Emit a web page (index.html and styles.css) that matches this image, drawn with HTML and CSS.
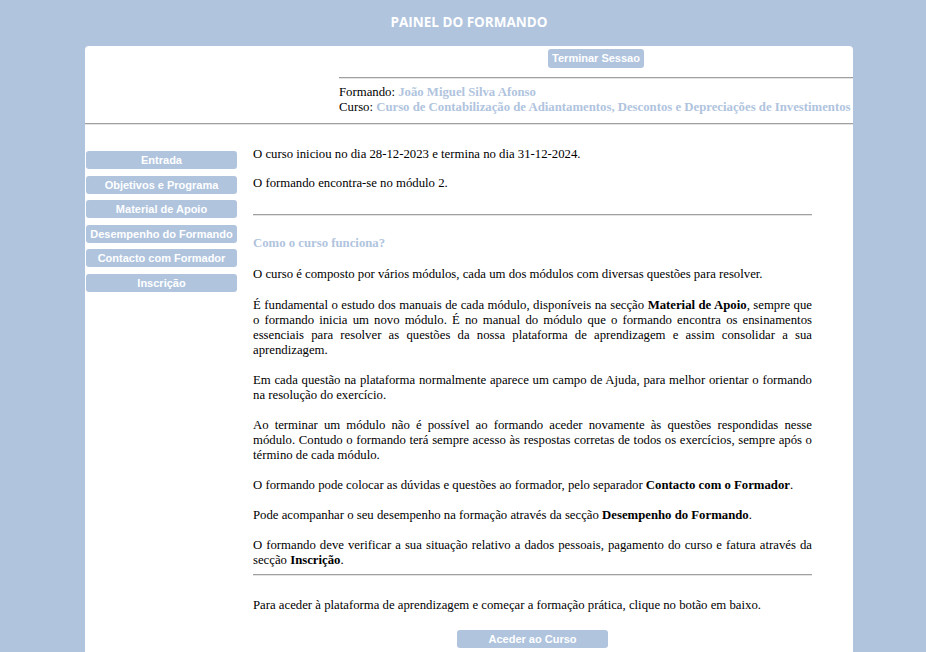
FILE: index.html
```html
<!DOCTYPE html>
<html lang="pt">
<head>
    <meta charset="UTF-8">
    <title>Painel do Formando</title>
    <link rel="stylesheet" href="styles.css">
</head>
<body>
    <div class="wrapper">
        <header class="header">
            <h1>PAINEL DO FORMANDO</h1>
        </header>

        <div class="card">
            <div class="top">
                <div></div>
                <div class="session">
                    <div class="session-btn"><button class="btn">Terminar Sessao</button></div>
                    <hr class="line">
                    <div class="info">
                        Formando: <b>João Miguel Silva Afonso</b><br>
                        Curso: <b>Curso de Contabilização de Adiantamentos, Descontos e Depreciações de Investimentos</b>
                    </div>
                </div>
            </div>
            <hr class="line">

            <div class="main">
                <nav class="menu">
                    <button class="btn">Entrada</button>
                    <button class="btn">Objetivos e Programa</button>
                    <button class="btn">Material de Apoio</button>
                    <button class="btn">Desempenho do Formando</button>
                    <button class="btn">Contacto com Formador</button>
                    <button class="btn">Inscrição</button>
                </nav>

                <div class="content">
                    <p class="first">O curso iniciou no dia 28-12-2023 e termina no dia 31-12-2024.</p>
                    <p>O formando encontra-se no módulo 2.</p>
                    <hr class="line sep">
                    <h3>Como o curso funciona?</h3>
                    <p class="intro">O curso é composto por vários módulos, cada um dos módulos com diversas questões para resolver.</p>
                    <p>É fundamental o estudo dos manuais de cada módulo, disponíveis na secção <b>Material de Apoio</b>, sempre que o formando inicia um novo módulo. É no manual do módulo que o formando encontra os ensinamentos essenciais para resolver as questões da nossa plataforma de aprendizagem e assim consolidar a sua aprendizagem.</p>
                    <p>Em cada questão na plataforma normalmente aparece um campo de Ajuda, para melhor orientar o formando na resolução do exercício.</p>
                    <p>Ao terminar um módulo não é possível ao formando aceder novamente às questões respondidas nesse módulo. Contudo o formando terá sempre acesso às respostas corretas de todos os exercícios, sempre após o término de cada módulo.</p>
                    <p>O formando pode colocar as dúvidas e questões ao formador, pelo separador <b>Contacto com o Formador</b>.</p>
                    <p>Pode acompanhar o seu desempenho na formação através da secção <b>Desempenho do Formando</b>.</p>
                    <p class="last">O formando deve verificar a sua situação relativo a dados pessoais, pagamento do curso e fatura através da secção <b>Inscrição</b>.</p>
                    <hr class="line sep-bottom">
                    <p>Para aceder à plataforma de aprendizagem e começar a formação prática, clique no botão em baixo.</p>
                    <div class="start">
                        <button class="btn">Aceder ao Curso</button>
                    </div>
                </div>
            </div>
        </div>
    </div>
</body>
</html>
```

FILE: styles.css
```css
:root {
    --primary-color: #b0c4de;
    --line-color: #a0a0a0;
    --text-color: #000;
}

* {
    margin: 0;
    padding: 0;
    box-sizing: border-box;
}

body {
    background-color: var(--primary-color);
    font-family: "Liberation Serif", "Times New Roman", serif;
    font-size: 12.75px;
    line-height: 15px;
    color: var(--text-color);
}

.wrapper {
    width: 768px;
    margin-left: 85px;
}

.header {
    height: 46px;
    display: flex;
    align-items: center;
    justify-content: center;
}

.header h1 {
    font-family: "Open Sans", Arial, sans-serif;
    font-size: 13.5px;
    font-weight: bold;
    color: white;
    padding-bottom: 1px;
}

.card {
    background-color: white;
    border-radius: 4px 4px 0 0;
    min-height: 620px;
}

.btn {
    background-color: var(--primary-color);
    color: white;
    font-family: "Liberation Sans", Arial, sans-serif;
    font-size: 11px;
    font-weight: bold;
    line-height: 14px;
    padding: 2px 3px;
    border: none;
    border-radius: 3px;
    cursor: pointer;
}

.line {
    border: none;
    border-top: 1px solid var(--line-color);
    border-bottom: 1px solid #e4e4e4;
    height: 0;
}

.top {
    display: grid;
    grid-template-columns: 254px minmax(0, 1fr);
    padding-top: 3px;
}

.session-btn {
    text-align: center;
}

.session-btn .btn {
    padding: 2px 4px 3px;
}

.session .line {
    margin-top: 9px;
}

.info {
    padding: 6px 0 8px;
    white-space: nowrap;
}

.info b {
    color: var(--primary-color);
}

.main {
    display: flex;
    padding-top: 22px;
}

.menu {
    width: 151px;
    margin-left: 1px;
    display: flex;
    flex-direction: column;
    gap: 6.6px;
    padding-top: 4px;
}

.menu .btn {
    width: 100%;
    height: 18px;
}

.content {
    width: 559px;
    margin-left: 16px;
    text-align: justify;
}

.content p {
    margin-bottom: 15px;
}

.content p.first {
    margin-bottom: 14px;
}

.content p.intro {
    margin-bottom: 16px;
}

.content h3 {
    font-size: 12.75px;
    color: var(--primary-color);
    margin-bottom: 16px;
}

.content .sep {
    margin: 23px 0 20px;
}

.content p.last {
    margin-bottom: 6px;
}

.content .sep-bottom {
    margin-bottom: 22px;
}

.start {
    text-align: center;
    padding-top: 2px;
}

.start .btn {
    width: 151px;
    height: 18px;
}
```
